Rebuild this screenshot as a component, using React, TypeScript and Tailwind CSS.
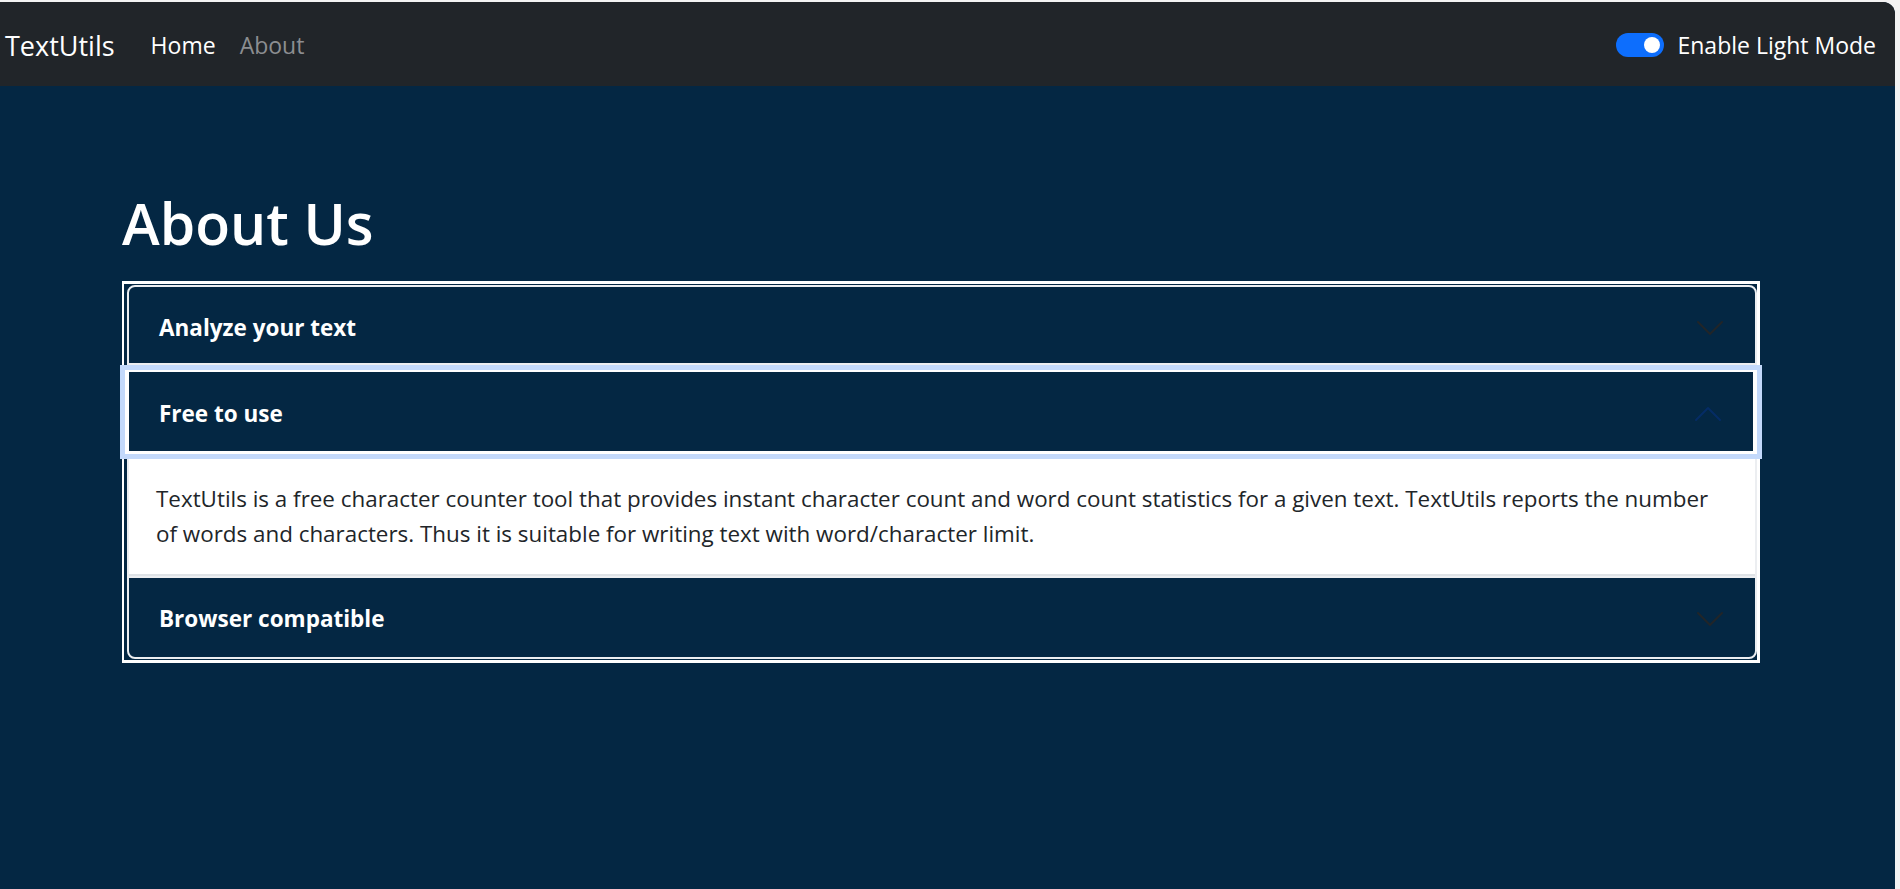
import React from "react";

const font = { fontFamily: '"Open Sans", "Noto Sans", Arial, sans-serif' };

function Chevron({ up = false, color = "#212529" }: { up?: boolean; color?: string }) {
  return (
    <svg
      width="32"
      height="32"
      viewBox="0 0 16 16"
      fill="none"
      stroke={color}
      strokeLinecap="round"
      strokeLinejoin="round"
      className={up ? "rotate-180" : ""}
    >
      <path d="M2 5L8 11L14 5" />
    </svg>
  );
}

function Navbar() {
  return (
    <nav className="flex h-[84px] items-center bg-[#212529] pl-[5px] pr-[19px] pt-[2px] text-white">
      <a className="text-[27px] leading-none">TextUtils</a>
      <ul className="ml-[36px] flex items-center gap-[24px] text-[23px] leading-none">
        <li className="text-white">Home</li>
        <li className="text-[#8c8e91]">About</li>
      </ul>
      <div className="ml-auto flex items-center gap-[13px]">
        <span className="flex h-[24px] w-[48px] items-center justify-end rounded-full bg-[#0d6efd] pr-[4px]">
          <span className="h-[16px] w-[16px] rounded-full bg-white" />
        </span>
        <label className="text-[23px] leading-none">Enable Light Mode</label>
      </div>
    </nav>
  );
}

function Accordion() {
  return (
    <div className="border-[3px] border-l-2 border-white pb-[1px] pl-[3px] pr-0 pt-[1px]">
      {/* item 1 */}
      <div className="rounded-t-[8px] border-2 border-[#eceef1] bg-[#042743]">
        <button className="flex h-[76px] w-full items-center justify-between pl-[30px] pr-[29px] pt-[6px] text-[22.5px] font-bold text-white">
          Analyze your text
          <Chevron />
        </button>
      </div>

      {/* item 2 (open, focused) */}
      <div className="border-x-2 border-[#eceef1] bg-white">
        <div className="-ml-[4px] -mr-[2px] pb-[6px] pt-[5px]">
          <button className="relative z-10 flex h-[84px] w-full items-center justify-between border-x-4 border-b-[3px] border-t-2 border-white bg-[#042743] pl-[30px] pr-[29px] pt-[4px] text-[22.5px] font-bold text-white shadow-[0_0_0_5px_#c3d9fb]">
            Free to use
            <Chevron up color="#052c65" />
          </button>
        </div>
        <div className="border-b-2 border-[#dee2e6] pb-[23px] pl-[27px] pr-[24px] pt-[21px] text-[22.4px] leading-[35px] text-[#212529]">
          TextUtils is a free character counter tool that provides instant character count and word count statistics for a given text. TextUtils reports the number of words and characters. Thus it is suitable for writing text with word/character limit.
        </div>
      </div>

      {/* item 3 */}
      <div className="rounded-b-[8px] border-2 border-[#eceef1] bg-[#042743]">
        <button className="flex h-[79px] w-full items-center justify-between pl-[30px] pr-[29px] pt-[3px] text-[22.5px] font-bold text-white">
          Browser compatible
          <Chevron />
        </button>
      </div>
    </div>
  );
}

export default function App() {
  return (
    <div className="h-[889px] overflow-hidden bg-[#f3f3f3] pr-[5px] pt-[2px]" style={font}>
      <div className="h-[887px] overflow-hidden rounded-tr-[12px] bg-[#042743]">
        <Navbar />
        <main className="pl-[122px] pr-[135px]">
          <h1 className="mb-[22px] mt-[101px] text-[57px] font-semibold leading-[72px] text-white">About Us</h1>
          <Accordion />
        </main>
      </div>
    </div>
  );
}
